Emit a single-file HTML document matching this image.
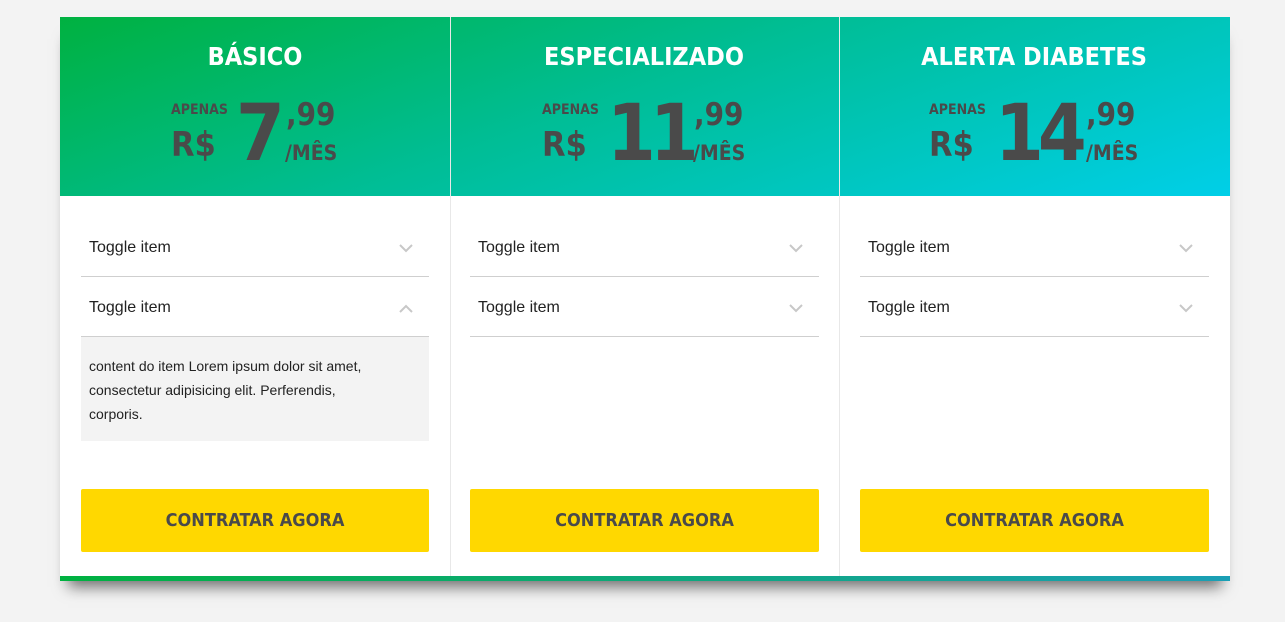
<!DOCTYPE html>
<html><head><meta charset="utf-8"><style>
*{margin:0;padding:0;box-sizing:border-box}
body{width:1285px;height:622px;background:#f3f3f3;font-family:"Liberation Sans",sans-serif;position:relative;overflow:hidden}
.wrap{position:absolute;left:60px;top:17px;width:1170px;height:564px;background:#fff;box-shadow:0 14px 14px -8px rgba(0,0,0,.55)}
.hdr{position:absolute;left:0;top:0;width:1170px;height:179px;background:linear-gradient(160deg,#00b140 0%,#00bd93 45%,#00cfe8 100%)}
.col{position:absolute;top:0;width:390px;height:559px}
.vl{position:absolute;top:0;width:1px;height:559px;background:#e8e8e8}
.title{position:absolute;top:25px;width:100%;text-align:center;color:#fff;font-weight:bold;font-size:25px;font-family:"DejaVu Sans Condensed","DejaVu Sans",sans-serif}
.price{position:absolute;top:80px;left:0;width:100%;height:80px;color:#4a4a4a;font-family:"DejaVu Sans Condensed","DejaVu Sans",sans-serif;font-weight:bold}
.ap{position:absolute;top:5px;font-size:14px}
.rs{position:absolute;top:28px;font-size:34px}
.num{position:absolute;top:-8px;font-size:78px;letter-spacing:-6px}
.cts{position:absolute;top:0px;font-size:31px}
.mes{position:absolute;top:44px;font-size:21px}
.row{position:absolute;left:21px;width:349px;height:60px;border-bottom:1px solid #cfcfcf;font-size:16px;color:#222}
.row span{position:absolute;left:8px;top:22px}
.row svg{position:absolute;right:16px;top:27px}
.cnt{position:absolute;left:21px;top:320px;width:348px;height:104px;background:#f3f3f3;font-size:14px;color:#222;line-height:24px;padding:17px 60px 16px 8px}
.btn{position:absolute;left:21px;top:472px;width:349px;height:63px;background:#ffd800;border-radius:2px;color:#4a4a4a;font-weight:bold;font-size:18px;text-align:center;line-height:64px;font-family:"DejaVu Sans Condensed","DejaVu Sans",sans-serif}
.bar{position:absolute;left:0;top:559px;width:1170px;height:5px;background:linear-gradient(90deg,#00b140,#1a9fb5)}
</style></head><body>
<div class="wrap">
<div class="hdr"></div>
<div class="vl" style="left:390px"></div><div class="vl" style="left:779px"></div>
<div class="col" style="left:0">
 <div class="title">BÁSICO</div>
 <div class="price"><div class="ap" style="left:111px">APENAS</div><div class="rs" style="left:111px">R$</div><div class="num" style="left:176px">7</div><div class="cts" style="left:226px">,99</div><div class="mes" style="left:225px">/MÊS</div></div>
 <div class="row" style="top:200px;width:348px"><span>Toggle item</span><svg width="14" height="9" viewBox="0 0 14 9"><path d="M1 1l6 6 6-6" fill="none" stroke="#c8c8c8" stroke-width="2"/></svg></div>
 <div class="row" style="top:260px;width:348px"><span>Toggle item</span><svg width="14" height="9" viewBox="0 0 14 9"><path d="M1 8l6-6 6 6" fill="none" stroke="#c8c8c8" stroke-width="2"/></svg></div>
 <div class="cnt">content do item Lorem ipsum dolor sit amet, consectetur adipisicing elit. Perferendis, corporis.</div>
 <div class="btn" style="width:348px">CONTRATAR AGORA</div>
</div>
<div class="col" style="left:389px">
 <div class="title">ESPECIALIZADO</div>
 <div class="price"><div class="ap" style="left:93px">APENAS</div><div class="rs" style="left:93px">R$</div><div class="num" style="left:158px">11</div><div class="cts" style="left:245px">,99</div><div class="mes" style="left:244px">/MÊS</div></div>
 <div class="row" style="top:200px"><span>Toggle item</span><svg width="14" height="9" viewBox="0 0 14 9"><path d="M1 1l6 6 6-6" fill="none" stroke="#c8c8c8" stroke-width="2"/></svg></div>
 <div class="row" style="top:260px"><span>Toggle item</span><svg width="14" height="9" viewBox="0 0 14 9"><path d="M1 1l6 6 6-6" fill="none" stroke="#c8c8c8" stroke-width="2"/></svg></div>
 <div class="btn">CONTRATAR AGORA</div>
</div>
<div class="col" style="left:779px">
 <div class="title">ALERTA DIABETES</div>
 <div class="price"><div class="ap" style="left:90px">APENAS</div><div class="rs" style="left:90px">R$</div><div class="num" style="left:156px">14</div><div class="cts" style="left:247px">,99</div><div class="mes" style="left:247px">/MÊS</div></div>
 <div class="row" style="top:200px"><span>Toggle item</span><svg width="14" height="9" viewBox="0 0 14 9"><path d="M1 1l6 6 6-6" fill="none" stroke="#c8c8c8" stroke-width="2"/></svg></div>
 <div class="row" style="top:260px"><span>Toggle item</span><svg width="14" height="9" viewBox="0 0 14 9"><path d="M1 8l6-6 6 6" fill="none" stroke="#c8c8c8" stroke-width="2" transform="rotate(180 7 4.5)"/></svg></div>
 <div class="btn">CONTRATAR AGORA</div>
</div>
<div class="bar"></div>
</div>
</body></html>
